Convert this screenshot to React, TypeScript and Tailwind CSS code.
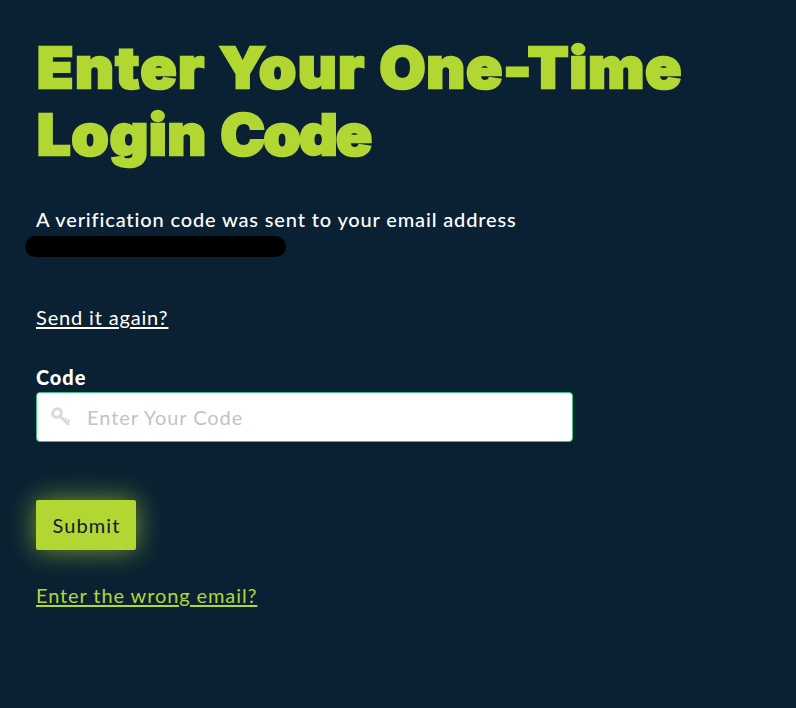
function KeyIcon() {
  return (
    <svg className="ml-[14px] h-5 w-5 shrink-0" viewBox="0 0 20 20" fill="none" stroke="#dadada">
      <ellipse cx="6" cy="6" rx="4.6" ry="4" strokeWidth="3" transform="rotate(-35 6 6)" />
      <path d="M9 9.3 L17.9 18" strokeWidth="2.8" />
      <path d="M13.2 13.7 L15.8 11.1 M15.6 15.9 L18.8 12.9" strokeWidth="2.3" />
    </svg>
  );
}

export default function App() {
  return (
    <main className="h-[708px] w-full overflow-hidden bg-[#0a2133] pl-9 font-[Lato,sans-serif] text-xl leading-[26px] text-white">
      <h1 className="h-[170px] w-[700px] origin-left scale-x-[1.06] pt-[34px] font-[Inter,sans-serif] text-[56px] font-black leading-[68px] text-[#b2d732] [-webkit-text-stroke:2.6px_#b2d732]">
        <span className="flex whitespace-nowrap pl-px">
          <span className="w-[172px] tracking-[1.7px]">Enter</span>
          <span className="w-[151px] tracking-[1.7px]">Your</span>
          <span className="tracking-[1px]">One-Time</span>
        </span>
        <span className="-mt-px flex whitespace-nowrap pl-px">
          <span className="w-[173px] tracking-[0.9px]">Login</span>
          <span className="tracking-[-1.3px]">Code</span>
        </span>
      </h1>
      <p className="mt-[36px] whitespace-nowrap font-medium tracking-[0.86px]">A verification code was sent to your email address</p>
      <div className="-ml-[11px] mt-[4px] h-[21px] w-[261px] rounded-full bg-black" />
      <a href="#" className="mt-[47px] block w-fit tracking-[0.84px] underline decoration-2 underline-offset-[2px]">Send it again?</a>
      <label className="mt-[34px] block font-black tracking-[0.9px]" htmlFor="code">Code</label>
      <div className="mt-[2px] flex h-[50px] w-[537px] items-center rounded-[4px] border border-[#35c37e] bg-white">
        <KeyIcon />
        <input id="code" className="ml-4 w-[440px] bg-transparent tracking-[0.93px] text-[#0a2133] outline-none placeholder:text-[#c3c3c3]" placeholder="Enter Your Code" />
      </div>
      <button className="mt-[58px] block h-[50px] w-[100px] rounded-[2px] bg-[#b2d732] pl-px tracking-[1.1px] text-[#0a2133] shadow-[0_0_25px_rgba(178,215,50,0.6),0_0_50px_rgba(178,215,50,0.12)]">Submit</button>
      <a href="#" className="mt-[32px] block w-fit tracking-[0.9px] text-[#b2d732] underline decoration-2 underline-offset-[2px]">Enter the wrong email?</a>
    </main>
  );
}
